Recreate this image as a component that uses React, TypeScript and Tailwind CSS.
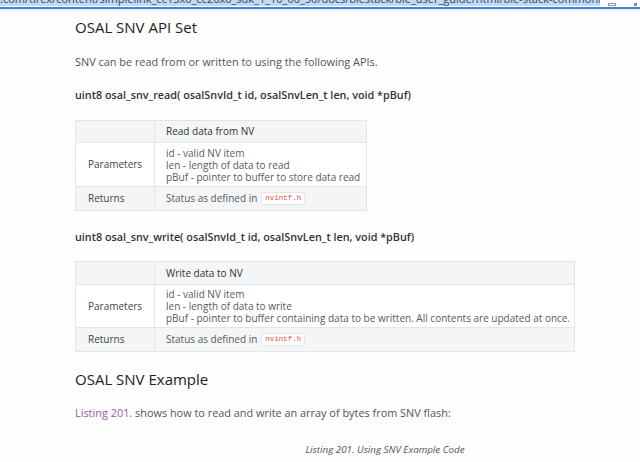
import React from "react";

const URL_TEXT =
  ".com/tirex/content/simplelink_cc13x0_cc26x0_sdk_1_10_00_50/docs/blestack/ble_user_guide/html/ble-stack-common/flash_memory";

function Code({ children }: { children: React.ReactNode }) {
  return (
    <code className="ml-[4px] inline-block rounded-[2px] border border-[#e4e6e8] bg-white px-[3px] text-[7.5px] leading-[11px] text-[#e74c3c] [font-family:'Liberation_Mono',monospace]">
      {children}
    </code>
  );
}

function ApiTable({
  title,
  params,
  width,
  headH,
  paramH,
}: {
  title: string;
  params: string[];
  width: string;
  headH: string;
  paramH: string;
}) {
  const cell = "flex items-center whitespace-nowrap border-r border-b border-[#e3e6e8] pl-[11px]";
  return (
    <div className={`${width} grid grid-cols-[79px_1fr] border-t border-l border-[#e3e6e8] text-[10px] text-[#5a5a5a]`}>
      <div className={`${cell} ${headH} bg-[#f3f5f6]`}></div>
      <div className={`${cell} ${headH} bg-[#f3f5f6] font-medium text-[#333]`}>{title}</div>
      <div className={`${cell} ${paramH} bg-white pl-[12px] text-[#444]`}>Parameters</div>
      <div className={`${cell} ${paramH} bg-white leading-[12px]`}>
        <div>
          {params.map((p) => (
            <div key={p}>{p}</div>
          ))}
        </div>
      </div>
      <div className={`${cell} h-[24px] bg-[#f3f5f6] pl-[12px] text-[#444]`}>Returns</div>
      <div className={`${cell} h-[24px] bg-[#f3f5f6]`}>
        Status as defined in<Code>nvintf.h</Code>
      </div>
    </div>
  );
}

export default function App() {
  return (
    <div className="h-[462px] w-[640px] overflow-hidden bg-[#fdfdfd] [font-family:'Open_Sans',sans-serif]">
      <div className="flex h-[6px] overflow-hidden bg-white">
        <div className="w-[600px] overflow-hidden bg-[#c4d8ef]">
          <div className="-translate-y-[7px] whitespace-nowrap text-[11px] leading-[12px] text-[#2d4a6e]">
            {URL_TEXT}
          </div>
        </div>
        <div className="flex flex-1 items-end gap-[18px] pl-[8px]">
          <div className="h-[3px] w-[8px] border border-[#999]"></div>
          <div className="h-[3px] w-[3px] bg-[#888]"></div>
        </div>
      </div>
      <div className="h-[1px] bg-white"></div>
      <div className="h-[2px] bg-[#3d86d9]"></div>
      <div className="h-[2px] bg-[#f0f0f0]"></div>

      <div className="pl-[75px] text-[#555]">
        <h1 className="mt-[5px] text-[15px] leading-[22px] font-normal text-[#222]">OSAL SNV API Set</h1>
        <p className="mt-[16px] text-[10.9px] leading-[16px]">
          SNV can be read from or written to using the following APIs.
        </p>
        <p className="mt-[17px] text-[10.8px] leading-[16px] font-semibold text-[#333]">
          uint8 osal_snv_read( osalSnvId_t id, osalSnvLen_t len, void *pBuf)
        </p>
        <div className="mt-[17px]">
          <ApiTable
            width="w-[292px]"
            headH="h-[22px]"
            paramH="h-[44px]"
            title="Read data from NV"
            params={["id - valid NV item", "len - length of data to read", "pBuf - pointer to buffer to store data read"]}
          />
        </div>
        <p className="mt-[18px] text-[10.8px] leading-[16px] font-semibold text-[#333]">
          uint8 osal_snv_write( osalSnvId_t id, osalSnvLen_t len, void *pBuf)
        </p>
        <div className="mt-[16px]">
          <ApiTable
            width="w-[500px]"
            headH="h-[23px]"
            paramH="h-[43px]"
            title="Write data to NV"
            params={[
              "id - valid NV item",
              "len - length of data to write",
              "pBuf - pointer to buffer containing data to be written. All contents are updated at once.",
            ]}
          />
        </div>
        <h2 className="mt-[16px] text-[15px] leading-[22px] font-normal text-[#222]">OSAL SNV Example</h2>
        <p className="mt-[15px] text-[10.9px] leading-[16px]">
          <a className="text-[#9b59b6]">Listing 201.</a> shows how to read and write an array of bytes from SNV flash:
        </p>
        <p className="mt-[22px] w-[620px] text-center text-[9.8px] leading-[14px] italic">
          Listing 201. Using SNV Example Code
        </p>
      </div>
    </div>
  );
}
